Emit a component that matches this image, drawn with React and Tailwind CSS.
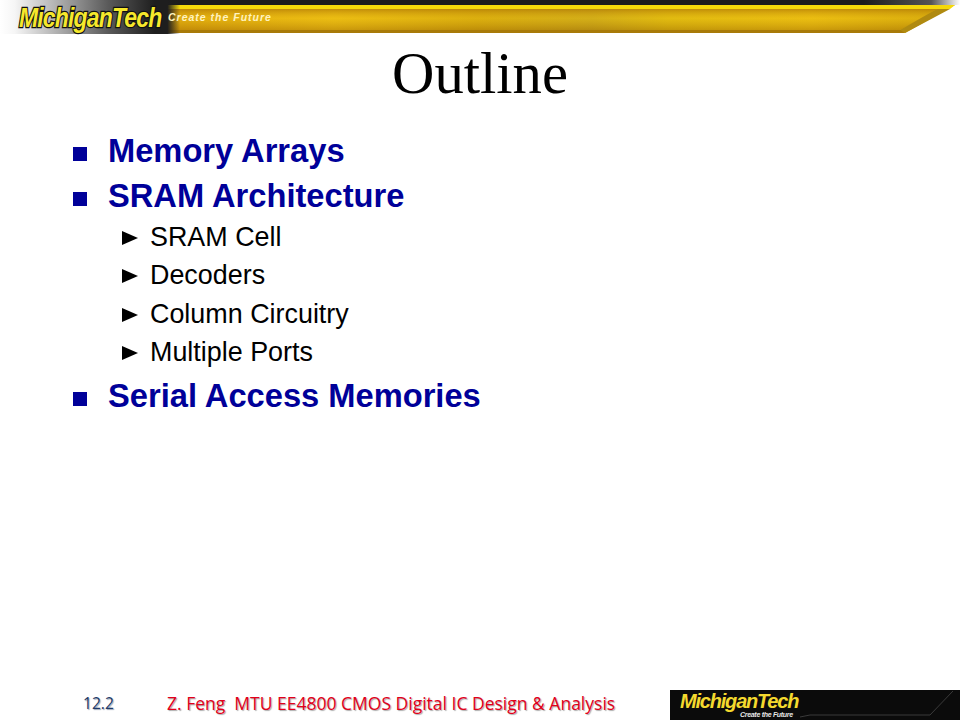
import React from 'react';

const topics = [
    { title: 'Memory Arrays' },
    {
        title: 'SRAM Architecture',
        children: ['SRAM Cell', 'Decoders', 'Column Circuitry', 'Multiple Ports'],
    },
    { title: 'Serial Access Memories' },
];

function BannerArt() {
    return (
        <svg className="absolute inset-0" width="960" height="36" viewBox="0 0 960 36">
            <defs>
                <linearGradient id="topFade" x1="0" x2="1" y1="0" y2="0">
                    <stop offset="0" stopColor="#ffffff" />
                    <stop offset="0.02" stopColor="#e8e8e8" />
                    <stop offset="0.07" stopColor="#555555" />
                    <stop offset="0.14" stopColor="#1c1c1c" />
                    <stop offset="0.9" stopColor="#1c1c1c" />
                    <stop offset="0.97" stopColor="#555555" />
                    <stop offset="1" stopColor="#ffffff" />
                </linearGradient>
                <linearGradient id="leftFade" x1="0" x2="1" y1="0" y2="0">
                    <stop offset="0" stopColor="#ffffff" />
                    <stop offset="0.08" stopColor="#f6f6f6" />
                    <stop offset="0.3" stopColor="#b5b5b5" />
                    <stop offset="0.6" stopColor="#5a5a5a" />
                    <stop offset="0.86" stopColor="#1e1e1e" />
                    <stop offset="0.93" stopColor="#1e1e1e" />
                    <stop offset="1" stopColor="#1e1e1e" stopOpacity="0" />
                </linearGradient>
                <linearGradient id="gold" x1="0" x2="1" y1="0" y2="0">
                    <stop offset="0" stopColor="#c98f0b" />
                    <stop offset="0.2" stopColor="#d9a00c" />
                    <stop offset="0.35" stopColor="#e7b712" />
                    <stop offset="0.5" stopColor="#cfa20c" />
                    <stop offset="0.62" stopColor="#c2a01a" />
                    <stop offset="0.7" stopColor="#d8b40e" />
                    <stop offset="0.85" stopColor="#e6b810" />
                    <stop offset="1" stopColor="#c99c0a" />
                </linearGradient>
                <linearGradient id="shine" x1="0" x2="0" y1="0" y2="1">
                    <stop offset="0" stopColor="#b47c06" stopOpacity="0.7" />
                    <stop offset="0.45" stopColor="#f3c814" stopOpacity="0.35" />
                    <stop offset="1" stopColor="#a87404" stopOpacity="0.45" />
                </linearGradient>
            </defs>
            <rect x="0" y="0" width="960" height="5" fill="url(#topFade)" />
            <polygon points="0,5 955,5 905,33 0,33" fill="url(#gold)" />
            <polygon points="0,9 937,9 900,30 0,30" fill="url(#shine)" />
            <polygon points="0,5 955,5 950,9 0,9" fill="#f5d90a" />
            <polygon points="0,30 906,30 904,33 0,33" fill="#a87a08" />
            <polygon points="937,9 950,9 905,33 900,30" fill="#b08a10" />
            <rect x="0" y="0" width="180" height="34" fill="url(#leftFade)" />
        </svg>
    );
}

function Header() {
    return (
        <header className="relative h-[36px] shrink-0 overflow-hidden">
            <BannerArt />
            <div className="relative flex h-[36px] items-center pl-[19px] italic">
                <div className="w-[149px] shrink-0">
                    <span className="block origin-left scale-x-[0.82] whitespace-nowrap font-['Liberation_Sans',sans-serif] text-[28px] font-bold leading-[36px] tracking-[-1px] text-[#f6e82c] [-webkit-text-stroke:2.5px_#111111] [paint-order:stroke_fill]">
                        MichiganTech
                    </span>
                </div>
                <span className="font-['Liberation_Sans',sans-serif] text-[10.5px] font-bold tracking-[1px] text-[#fff3c0]">
                    Create the Future
                </span>
            </div>
        </header>
    );
}

function Footer() {
    return (
        <footer className="flex h-[30px] shrink-0 items-end">
            <div className="flex h-[30px] w-[670px] items-center pb-[3px] font-['Open_Sans',sans-serif]">
                <span className="ml-[83px] w-[84px] text-[15.6px] text-[#1f3a68] [text-shadow:1px_1px_1px_#9aa4b4]">12.2</span>
                <span className="whitespace-pre text-[17.5px] font-medium text-[#e2001a] [text-shadow:1px_1px_1px_#aaaaaa]">
                    Z. Feng  MTU EE4800 CMOS Digital IC Design &amp; Analysis
                </span>
            </div>
            <div className="relative flex h-[30px] flex-1 flex-col bg-[#0b0b0b] pl-[10px] pt-[2px] font-['Liberation_Sans',sans-serif] italic">
                <svg className="absolute inset-0" width="290" height="30" viewBox="0 0 290 30">
                    <polyline points="130,27 140,25 260,25 283,1" fill="none" stroke="#3a3a3a" strokeWidth="1" />
                </svg>
                <span className="relative text-[20px] font-bold leading-[19px] tracking-[-1.2px] text-[#f4d92e]">MichiganTech</span>
                <span className="relative ml-[60px] text-[7px] font-bold leading-[8px] tracking-[-0.3px] text-[#e8e8e8]">Create the Future</span>
            </div>
        </footer>
    );
}

export default function App() {
    return (
        <div className="flex h-[720px] w-[960px] flex-col overflow-hidden bg-white font-['Liberation_Sans',sans-serif]">
            <Header />
            <main className="flex-1">
                <h1 className="mt-[3px] h-[70px] text-center font-['Liberation_Serif',serif] text-[58.67px] leading-[70px] text-black">
                    Outline
                </h1>
                <ul className="mt-[19.4px] pl-[73px]">
                    {topics.map((topic) => (
                        <li key={topic.title}>
                            <div className="flex h-[45.3px] items-center">
                                <span className="h-[14px] w-[14px] translate-y-[3px] bg-[#000099]"></span>
                                <span className="ml-[21px] text-[32.66px] font-bold leading-none text-[#000099]">{topic.title}</span>
                            </div>
                            {topic.children && (
                                <ul className="-mt-[1px] mb-[2px] pl-[48px]">
                                    {topic.children.map((child) => (
                                        <li key={child} className="flex h-[38.33px] items-center text-[26.9px] text-black">
                                            <svg width="18" height="16" viewBox="0 0 18 16" className="translate-y-[1px]">
                                                <polygon points="1,1 17,8 1,15" fill="#000000" />
                                            </svg>
                                            <span className="ml-[11px]">{child}</span>
                                        </li>
                                    ))}
                                </ul>
                            )}
                        </li>
                    ))}
                </ul>
            </main>
            <Footer />
        </div>
    );
}
